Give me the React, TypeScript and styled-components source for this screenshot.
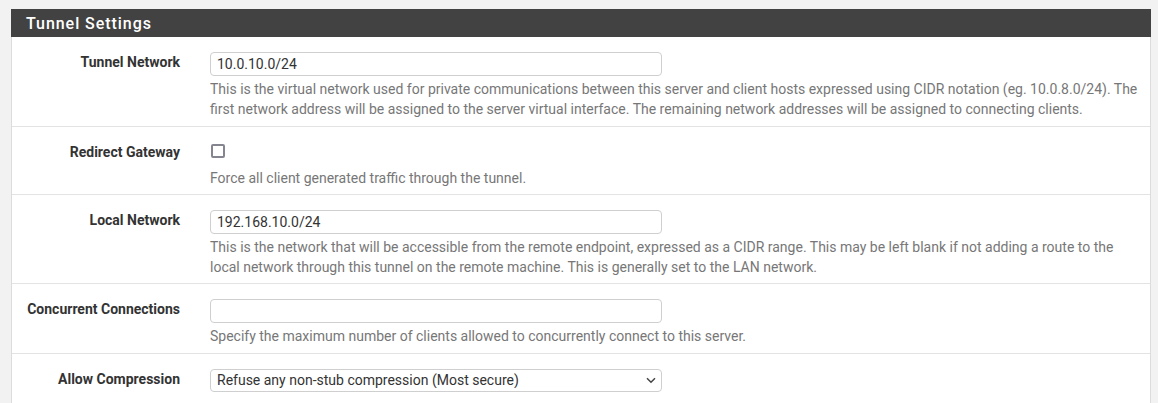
import React from "react";
import styled, { createGlobalStyle } from "styled-components";

const GlobalStyle = createGlobalStyle`
  html, body {
    margin: 0;
    padding: 0;
    background: #f2f2f2;
    font-family: Roboto, "Noto Sans", "Liberation Sans", sans-serif;
  }
`;

const Page = styled.div`
  padding: 9px 7px 0 11px;
`;

const Panel = styled.section`
  background: #fff;
  border: 1px solid #dcdcdc;
  border-top: none;
  border-bottom: none;
`;

const PanelHeading = styled.div`
  background: #424242;
  height: 28px;
  display: flex;
  align-items: center;
  padding-left: 15px;
  margin: 0 -1px;
`;

const PanelTitle = styled.h2`
  margin: 0;
  color: #fff;
  font-size: 16px;
  font-weight: 500;
  letter-spacing: 0.95px;
`;

const Row = styled.div`
  display: grid;
  grid-template-columns: 168px 1fr;
  column-gap: 30px;
  padding: 15px 12px 6px 0;
  border-top: 1px solid #e3e3e3;
  &:first-child {
    border-top: none;
  }
`;

const Label = styled.label`
  text-align: right;
  font-size: 14px;
  font-weight: 700;
  color: #333;
  line-height: 20px;
`;

const Field = styled.div`
  display: flex;
  flex-direction: column;
  align-items: flex-start;
`;

const TextInput = styled.input`
  box-sizing: border-box;
  width: 452px;
  height: 24px;
  padding: 2px 6px;
  font-family: inherit;
  font-size: 14px;
  color: #333;
  border: 1px solid #cfcfcf;
  border-radius: 4px;
  background: #fff;
  outline: none;
`;

const SelectWrap = styled.div`
  position: relative;
  width: 452px;
`;

const Select = styled.select`
  box-sizing: border-box;
  width: 452px;
  height: 23px;
  padding: 0 6px;
  font-family: inherit;
  font-size: 14px;
  color: #333;
  border: 1px solid #cfcfcf;
  border-radius: 4px;
  background: #fff;
  appearance: none;
  outline: none;
`;

const Chevron = styled.svg`
  position: absolute;
  right: 6px;
  top: 8px;
  pointer-events: none;
`;

const CheckBox = styled.input`
  appearance: none;
  box-sizing: border-box;
  margin: 2px 0 0 1px;
  width: 14px;
  height: 14px;
  border: 2px solid #858590;
  border-radius: 2px;
  background: #fff;
`;

const Help = styled.p<{ $gap?: number }>`
  margin: ${(p) => p.$gap ?? 3}px 0 0;
  font-size: 14px;
  line-height: 20.3px;
  color: #777;
`;

export default function App() {
  return (
    <>
      <GlobalStyle />
      <Page>
        <Panel>
          <PanelHeading>
            <PanelTitle>Tunnel Settings</PanelTitle>
          </PanelHeading>
          <div>
            <Row>
              <Label>Tunnel Network</Label>
              <Field>
                <TextInput defaultValue="10.0.10.0/24" />
                <Help>
                  This is the virtual network used for private communications between this server and client hosts
                  expressed using CIDR notation (eg. 10.0.8.0/24). The first network address will be assigned to the
                  server virtual interface. The remaining network addresses will be assigned to connecting clients.
                </Help>
              </Field>
            </Row>
            <Row>
              <Label>Redirect Gateway</Label>
              <Field>
                <CheckBox type="checkbox" />
                <Help $gap={10}>Force all client generated traffic through the tunnel.</Help>
              </Field>
            </Row>
            <Row>
              <Label>Local Network</Label>
              <Field>
                <TextInput defaultValue="192.168.10.0/24" />
                <Help>
                  This is the network that will be accessible from the remote endpoint, expressed as a CIDR range. This
                  may be left blank if not adding a route to the local network through this tunnel on the remote
                  machine. This is generally set to the LAN network.
                </Help>
              </Field>
            </Row>
            <Row>
              <Label>Concurrent Connections</Label>
              <Field>
                <TextInput defaultValue="" />
                <Help>Specify the maximum number of clients allowed to concurrently connect to this server.</Help>
              </Field>
            </Row>
            <Row>
              <Label>Allow Compression</Label>
              <Field>
                <SelectWrap>
                  <Select defaultValue="no">
                    <option value="no">Refuse any non-stub compression (Most secure)</option>
                  </Select>
                  <Chevron width="10" height="7" viewBox="0 0 10 7">
                    <path d="M1 1.2 L5 5.2 L9 1.2" fill="none" stroke="#444" strokeWidth="1.5" />
                  </Chevron>
                </SelectWrap>
                <Help>&nbsp;</Help>
              </Field>
            </Row>
          </div>
        </Panel>
      </Page>
    </>
  );
}
